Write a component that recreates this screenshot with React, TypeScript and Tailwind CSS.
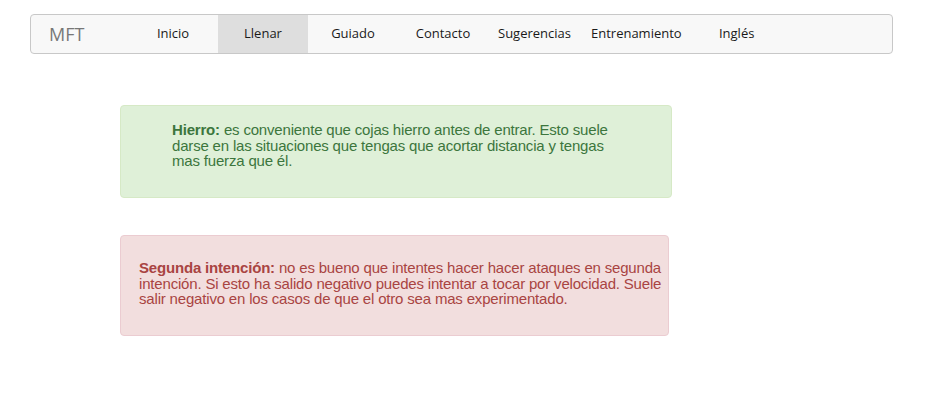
export default function App() {
  const links = ["Inicio", "Llenar", "Guiado", "Contacto", "Sugerencias", "Entrenamiento", "Inglés"];

  return (
    <div className="min-h-[416px] w-full bg-white">
      {/* Navbar */}
      <div className="pt-[14px] px-[30px]">
        <nav className="flex h-[40px] w-[863px] items-stretch rounded-[4px] border border-[#c8c8c8] bg-[#f8f8f8] font-['Open_Sans',sans-serif]">
          <span className="flex w-[97px] items-center pl-[18px] text-[18px] text-[#777]">MFT</span>
          <ul className="flex items-stretch">
            {links.map((l) => (
              <li
                key={l}
                className={
                  "flex min-w-[90px] items-center justify-center px-[10px] text-[13px] text-[#1a1a1a] " +
                  (l === "Llenar" ? "bg-[#dedede]" : "")
                }
              >
                {l}
              </li>
            ))}
          </ul>
        </nav>
      </div>

      {/* Alerts */}
      <div className="flex flex-col gap-[37px] pt-[51px] pl-[120px] font-['Liberation_Sans',Arial,sans-serif] text-[15px] leading-[15.5px] tracking-[-0.18px]">
        <div className="h-[93px] w-[552px] rounded-[4px] border border-[#d6e9c6] bg-[#dff0d8] pl-[51px] pt-[16px] text-[#3c763d]">
          <p className="w-[460px]">
            <b>Hierro:</b> es conveniente que cojas hierro antes de entrar. Esto suele darse en las situaciones que tengas que acortar distancia y tengas mas fuerza que él.
          </p>
        </div>
        <div className="h-[101px] w-[549px] rounded-[4px] border border-[#ebccd1] bg-[#f2dede] pl-[18px] pt-[24px] text-[#a94442]">
          <p className="w-[526px]">
            <b>Segunda intención:</b> no es bueno que intentes hacer hacer ataques en segunda intención. Si esto ha salido negativo puedes intentar a tocar por velocidad. Suele salir negativo en los casos de que el otro sea mas experimentado.
          </p>
        </div>
      </div>
    </div>
  );
}
